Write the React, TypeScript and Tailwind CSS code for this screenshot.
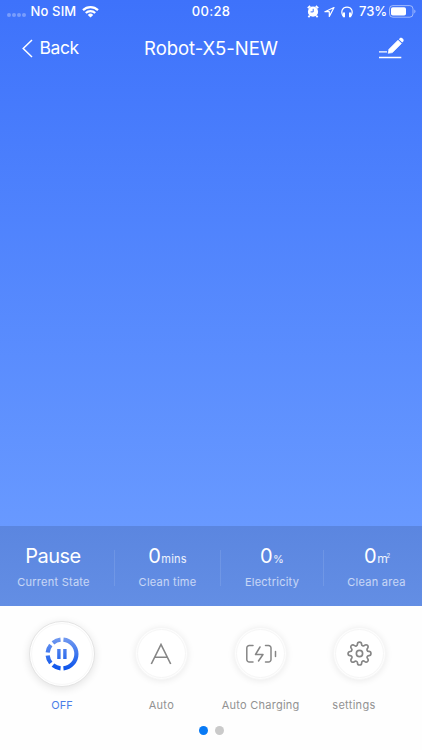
import type { ReactNode } from "react";
import { FiSettings } from "react-icons/fi";

const stats = [
  { value: "Pause", unit: "", label: "Current State", box: "w-[107px] mr-[7px]" },
  { value: "0", unit: "mins", label: "Clean time", box: "w-[120px] -mx-[7.5px]" },
  { value: "0", unit: "%", label: "Electricity", box: "w-[88px] mx-[7px]" },
  { value: "0", unit: "m²", label: "Clean area", box: "w-[105px]" },
];

function StatusBar() {
  return (
    <div className="grid h-[23px] grid-cols-3 items-center text-[13px] font-medium leading-none">
      <div className="flex items-center pl-[7px]">
        <div className="mt-[7px] flex gap-[1.5px]">
          <i className="size-[3.5px] rounded-full bg-white/30" />
          <i className="size-[3.5px] rounded-full bg-white/30" />
          <i className="size-[3.5px] rounded-full bg-white/30" />
          <i className="size-[3.5px] rounded-full bg-white/30" />
        </div>
        <span className="ml-[5px] w-[46px] whitespace-nowrap tracking-[0.15px]">No SIM</span>
        <svg className="ml-[5px]" width="17" height="13" viewBox="0 0 17 13" fill="none" stroke="white" strokeWidth="2.2">
          <path d="M1 5.1a10.8 10.8 0 0 1 15 0" />
          <path d="M3.8 8a6.7 6.7 0 0 1 9.4 0" />
          <path d="M8.5 12.6 5.8 9.900a3.800 3.800 0 0 1 5.400 0Z" fill="white" stroke="none" />
        </svg>
      </div>
      <span className="text-center tracking-[0.3px]">00:28</span>
      <div className="flex items-center justify-end pr-[5px]">
        <svg width="12" height="13" viewBox="0 0 12 13">
          <circle cx="6" cy="6.7" r="5.1" fill="white" />
          <path d="M.8 3.2 3.2 1M11.2 3.2 8.8 1M2.7 10.6l-1.3 1.6M9.3 10.6l1.3 1.6" stroke="white" strokeWidth="1.8" />
          <path d="M6.2 3.8v3.1H3.6" fill="none" stroke="#4176fb" strokeWidth="1" />
        </svg>
        <svg className="ml-[5px]" width="11" height="12" viewBox="0 0 11 12" fill="none" stroke="white" strokeWidth="1.2" strokeLinejoin="round">
          <path d="M10 1.5 .9 5.7h4.4v4.8Z" />
        </svg>
        <svg className="ml-[6px]" width="12" height="12" viewBox="0 0 12 12" fill="none" stroke="white" strokeWidth="1.2">
          <path d="M2 10C-.6 5.5 1.5 1.1 6 1.1S12.6 5.5 10 10" />
          <path d="M2.9 6.6v4.6M9.1 6.6v4.6" strokeWidth="2.2" />
        </svg>
        <span className="ml-[6px] w-[28px] whitespace-nowrap">73%</span>
        <svg className="ml-[2px]" width="28" height="13" viewBox="0 0 28 13">
          <rect x=".5" y=".6" width="23.5" height="11.6" rx="3.3" fill="none" stroke="white" strokeOpacity=".5" />
          <rect x="2" y="2.2" width="15" height="8.4" rx="1.8" fill="white" />
          <path d="M25.3 4.5c1.6.6 1.6 3.3 0 3.9Z" fill="white" fillOpacity=".5" />
        </svg>
      </div>
    </div>
  );
}

function Header() {
  return (
    <header className="grid h-[50px] grid-cols-[100px_1fr_100px] items-center">
      <button className="flex items-center pl-[22px] text-[17.5px] tracking-[-0.45px]">
        <svg className="mr-[6.5px] shrink-0" width="11" height="19" viewBox="0 0 11 19" fill="none" stroke="white" strokeWidth="1.5">
          <path d="M10 1 1.2 9.5 10 18" />
        </svg>
        Back
      </button>
      <h1 className="mt-[2px] whitespace-nowrap text-center text-[18.5px] tracking-[-0.05px]">Robot-X5-NEW</h1>
      <svg className="ml-[56px]" width="28" height="24" viewBox="0 0 28 24" fill="white">
        <path d="m11 13.2 9-9 3.4 3.4-9 9-4.2.7Z" strokeLinejoin="round" stroke="white" strokeWidth=".7" />
        <path d="m20.8 3.2 1-1c1.8-1.6 5 1.6 3.4 3.4l-1 1Z" />
        <path d="M1 15.2h8v1.4H1ZM1 20.8h22.3v1.5H1Z" />
      </svg>
    </header>
  );
}

function PauseRing() {
  return (
    <svg width="34" height="34" viewBox="0 0 34 34">
      <defs>
        <linearGradient id="ring" gradientUnits="userSpaceOnUse" x1="17" y1="0" x2="17" y2="34">
          <stop stopColor="#759cf0" />
          <stop offset="1" stopColor="#0650eb" />
        </linearGradient>
      </defs>
      <path
        d="M17 2.6a14.4 14.4 0 0 1 0 28.8a14.4 14.4 0 0 1 0-28.8"
        fill="none"
        stroke="url(#ring)"
        strokeWidth="4.2"
        pathLength="360"
        strokeDasharray="168 12 33 12 33 12 33 12 33 12"
        strokeDashoffset="-6"
      />
      <path d="M12.2 12h3.4v10h-3.4ZM18.2 12h3.4v10h-3.4Z" fill="url(#ring)" />
    </svg>
  );
}

function Action({ label, active, className, children }: { label: string; active?: boolean; className?: string; children: ReactNode }) {
  return (
    <div className="flex w-[99.3px] shrink-0 flex-col items-center">
      <div className="flex h-[67px] items-center">
        {active ? (
          <div className="flex size-[66px] items-center justify-center rounded-full border border-[#e4e4e4] bg-white shadow-[0_2px_8px_rgba(0,0,0,0.11)]">
            <div className="flex size-[62px] items-center justify-center rounded-full border border-[#f8f8f8]">{children}</div>
          </div>
        ) : (
          <div className="flex size-[53px] items-center justify-center rounded-full border border-[#f6f6f6] bg-[#fdfdfd] text-[#868686] shadow-[0_1px_7px_rgba(0,0,0,0.08)]">
            <div className="flex size-[49px] items-center justify-center rounded-full border border-[#f6f6f6] bg-white">{children}</div>
          </div>
        )}
      </div>
      <span className={`mt-[9.5px] whitespace-nowrap text-[11px] leading-4 ${active ? "text-[#4b7ee8]" : "text-[#929292]"} ${className ?? ""}`}>
        {label}
      </span>
    </div>
  );
}

export default function App() {
  return (
    <div className="flex h-[750px] w-[422px] flex-col overflow-hidden bg-[#fefefe] font-['Inter',sans-serif]">
      <div className="h-[526px] bg-linear-to-b from-[#3e72fb] to-[#6899ff] text-white">
        <StatusBar />
        <Header />
      </div>

      <div className="flex h-20 bg-linear-to-b from-[#5b86e0] to-[#638ee4] text-white">
        {stats.map((stat, i) => (
          <div key={stat.label} className="contents">
            {i > 0 && <div className="mt-6 h-9 w-px shrink-0 bg-white/10" />}
            <div className={`flex shrink-0 flex-col items-center pt-4 ${stat.box}`}>
              <div className="flex h-7 items-baseline whitespace-nowrap text-[20px] leading-7 tracking-[-0.5px]">
                {stat.value}
                {stat.unit === "m²" ? (
                  <span className="ml-px text-[12px] tracking-[-1.2px] text-white/90">
                    m<sup className="relative top-[-5px] align-baseline text-[6px] leading-none">2</sup>
                  </span>
                ) : (
                  <span className="ml-px text-[11px] tracking-[0.2px] text-white/90">{stat.unit}</span>
                )}
              </div>
              <span className="mt-[3.5px] whitespace-nowrap text-[11px] leading-4 tracking-[0.25px] text-white/65">{stat.label}</span>
            </div>
          </div>
        ))}
      </div>

      <div className="flex pl-[12.4px] pt-[14px]">
        <Action label="OFF" active>
          <PauseRing />
        </Action>
        <Action label="Auto" className="tracking-[0.3px]">
          <svg width="22" height="22" viewBox="0 0 22 22" fill="none" stroke="currentColor" strokeWidth="1.6">
            <path d="M1.3 21 11 1.5 20.7 21M5 14.3h12" />
          </svg>
        </Action>
        <Action label="Auto Charging" className="tracking-[0.25px]">
          <svg width="32" height="20" viewBox="0 0 32 20" fill="none" stroke="currentColor" strokeWidth="1.5" strokeLinecap="round" strokeLinejoin="round">
            <path d="M8 1.5H4.3A2.5 2.5 0 0 0 1.8 4v11.5A2.5 2.5 0 0 0 4.3 18H8M20.5 1.5h3A2.5 2.5 0 0 1 26 4v11.5a2.5 2.5 0 0 1-2.5 2.5h-3M30.5 7.5v5" />
            <path d="m15 3-4.5 7.5H18L13.500 17" />
          </svg>
        </Action>
        <Action label="settings" className="mr-[12px] tracking-[0.3px]">
          <FiSettings size={25} strokeWidth={1.6} />
        </Action>
      </div>

      <div className="mt-[13.5px] flex justify-center gap-[7px]">
        <i className="size-[9px] rounded-full bg-[#087af5]" />
        <i className="size-[9px] rounded-full bg-[#cacaca]" />
      </div>
    </div>
  );
}
